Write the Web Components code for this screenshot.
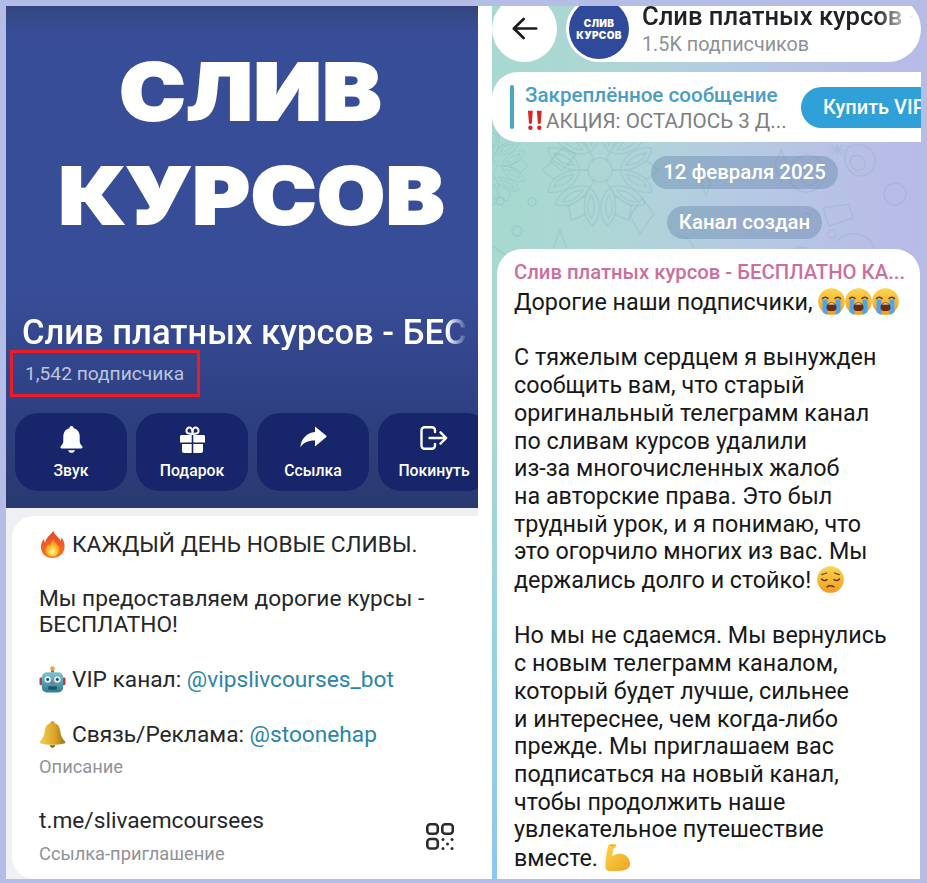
<!DOCTYPE html>
<html lang="ru"><head><meta charset="utf-8"><title>Слив платных курсов</title>
<style>html,body{margin:0;padding:0;height:883px;overflow:hidden;background:#b3bde6;font-family:Roboto,"Liberation Sans",sans-serif}</style>
</head><body>
<x-page>
  <x-profile slot="left"></x-profile>
  <x-chat slot="right"></x-chat>
</x-page>
<script>
const ICONS={
 bell:`<svg width="23" height="28" viewBox="0 0 23 28" fill="#fff"><path d="M11.5 0c1.3 0 2.2 1 2.2 2.3 4 1 6 4.3 6 8.2v5c0 2 1.3 3.3 2.5 4.8.8 1 .3 2.2-1 2.2H1.8c-1.3 0-1.8-1.2-1-2.2 1.2-1.5 2.5-2.8 2.5-4.8v-5c0-3.9 2-7.2 6-8.2C9.3 1 10.2 0 11.5 0z"/><path d="M8 24.2h7c-.5 1.6-2 2.6-3.5 2.6S8.5 25.800 8 24.200z"/></svg>`,
 gift:`<svg width="25" height="27" viewBox="0 0 25 27"><g fill="none" stroke="#fff" stroke-width="2"><path d="M12.500 8C10 8 7 8 6.500 5.500 6 3 8 1.200 10 1.500c2 .4 2.500 3 2.500 6.500zM12.500 8c2.500 0 5.500 0 6-2.500.5-2.500-1.500-4.300-3.500-4-2 .4-2.500 3-2.500 6.500z"/></g><g fill="#fff"><path d="M1.500 9h10.200v7.500H0V10.500C0 9.700.7 9 1.500 9zM13.300 9h10.200c.8 0 1.500.7 1.500 1.500v6H13.300z"/><path d="M2 18h9.700v9H4c-1.100 0-2-.9-2-2zM13.300 18H23v7c0 1.100-.9 2-2 2h-7.700z"/></g></svg>`,
 share:`<svg width="27" height="22" viewBox="0 0 27 22" fill="#fff"><path d="M15 0.500l11.300 9.300c.4.300.4.900 0 1.200L15 20.500V14.600C8.500 14.400 3.600 16.500.3 21.500 1 13 6.500 6.900 15 6z"/></svg>`,
 exit:`<svg width="28" height="24" viewBox="0 0 28 24" fill="none" stroke="#fff" stroke-width="2.400" stroke-linecap="round" stroke-linejoin="round"><path d="M15 6V4.200A3 3 0 0 0 12 1.200H4.500a3 3 0 0 0-3 3v15.600a3 3 0 0 0 3 3H12a3 3 0 0 0 3-3V18"/><path d="M9.500 12H26M20.500 6.300 26.200 12l-5.700 5.700"/></svg>`,
 qr:`<svg width="28" height="27" viewBox="0 0 28 27" fill="none" stroke="#2b2c2e" stroke-width="2.600"><rect x="1.300" y="1.300" width="10.500" height="9.500" rx="3"/><rect x="16.300" y="1.300" width="10.500" height="9.500" rx="3"/><rect x="1.300" y="16" width="10.500" height="9.500" rx="3"/><g fill="#2b2c2e" stroke="none"><circle cx="17" cy="16.500" r="1.500"/><circle cx="26" cy="16.500" r="1.500"/><circle cx="21.500" cy="21" r="1.500"/><circle cx="17" cy="25.500" r="1.500"/><circle cx="26" cy="25.500" r="1.500"/></g></svg>`,
 back:`<svg width="26" height="23" viewBox="0 0 28 24" fill="none" stroke="#1b1c1e" stroke-width="2.900" stroke-linecap="round" stroke-linejoin="round"><path d="M26 12H2.500M12.500 1.800 2 12l10.500 10.200"/></svg>`
};
const EMOJI={
 fire:`<svg viewBox="0 0 27 28"><defs><linearGradient id="f" x1="0" y1="0" x2="0" y2="1"><stop offset="0" stop-color="#e8452a"/><stop offset="1" stop-color="#f47a20"/></linearGradient><radialGradient id="g" cx=".5" cy=".72" r=".6"><stop offset="0" stop-color="#fff6b0"/><stop offset=".5" stop-color="#fdc22e"/><stop offset="1" stop-color="#f68a1e"/></radialGradient></defs><path fill="url(#f)" d="M14.500 0c1 4 5 6 7.500 10 .6-1 .8-2 .8-3.300C25.400 10 26 13 26 16c0 7-5.500 12-12.500 12S1.500 23 1.500 16.500c0-3 1.200-6 3-8.500 0 1.500.5 3 1.500 3.800C6.500 7 11 4.500 14.500 0z"/><path fill="url(#g)" d="M14.500 8.500c.5 3 4.800 5 6 9 1 4.500-2.500 9-7 9s-8-3.500-7-8c.5-2.300 2-3.800 3-5 .3 1 .7 1.700 1.500 2 0-3 1.500-5 3.500-7z"/></svg>`,
 bot:`<svg viewBox="0 0 27 28"><defs><linearGradient id="b" x1="0" y1="0" x2="0" y2="1"><stop offset="0" stop-color="#7fc4d0"/><stop offset="1" stop-color="#2e7f95"/></linearGradient></defs><rect x="12" y="3.500" width="3" height="4" fill="#8a6d3b"/><circle cx="13.500" cy="2.600" r="2.400" fill="#f2a13a"/><rect x="0" y="12" width="4" height="8" rx="1.500" fill="#b43a4c"/><rect x="23" y="12" width="4" height="8" rx="1.500" fill="#b43a4c"/><rect x="2.500" y="6.500" width="22" height="21" rx="5" fill="url(#b)"/><circle cx="8.500" cy="14" r="3.300" fill="#dfeef2"/><circle cx="18.500" cy="14" r="3.300" fill="#dfeef2"/><circle cx="8.500" cy="14" r="1.500" fill="#254a5a"/><circle cx="18.500" cy="14" r="1.500" fill="#254a5a"/><path d="M13.500 15.500l2 3.500h-4z" fill="#d94a4a"/><rect x="9" y="21" width="9" height="3.500" rx="1" fill="#21566a"/></svg>`,
 bell:`<svg viewBox="0 0 27 28"><defs><linearGradient id="c" x1="0" y1="0" x2="1" y2="0"><stop offset="0" stop-color="#f6d04e"/><stop offset=".6" stop-color="#d9a326"/><stop offset="1" stop-color="#9a7414"/></linearGradient></defs><circle cx="13.500" cy="2.500" r="2.300" fill="#c4961e"/><path fill="url(#c)" d="M13.500 2c5 0 7.500 3.500 8 8 .5 5 2 8 5.200 11.500.5.800 0 1.500-1 1.800-3.500 1-7.700 1.400-12.200 1.400s-8.700-.4-12.200-1.400c-1-.3-1.500-1-1-1.800C3.500 18 5 15 5.500 10c.5-4.500 3-8 8-8z"/><path d="M10.500 25.200c.5 1.700 1.700 2.600 3 2.600s2.500-.9 3-2.600z" fill="#7e5e10"/></svg>`,
 cry:`<svg viewBox="0 0 27 27"><defs><linearGradient id="y" x1="0" y1="0" x2="0" y2="1"><stop offset="0" stop-color="#fcd64e"/><stop offset="1" stop-color="#f39a1f"/></linearGradient></defs><circle cx="13.500" cy="13.500" r="13.300" fill="url(#y)"/><path d="M4.500 10.500c1.300-1.700 4.200-1.700 5.500 0M17 10.500c1.300-1.700 4.200-1.700 5.500 0" stroke="#5a3610" stroke-width="1.500" fill="none" stroke-linecap="round"/><path d="M4.500 11.500h5v15.200C7 26.200 5.500 25 4.500 24zM17.500 11.500h5V24c-1 1-2.500 2.200-5 2.700z" fill="#4ea6ea"/><path d="M8.500 19.500c0-3 2.300-5 5-5s5 2 5 5c0 3-2.200 3.500-5 3.500s-5-.5-5-3.500z" fill="#6b2b12"/><path d="M10 16.500c1-1 2.200-1.300 3.500-1.300s2.500.3 3.500 1.300z" fill="#fff"/></svg>`,
 sad:`<svg viewBox="0 0 27 27"><defs><linearGradient id="s" x1="0" y1="0" x2="0" y2="1"><stop offset="0" stop-color="#fcd64e"/><stop offset="1" stop-color="#f39a1f"/></linearGradient></defs><circle cx="13.500" cy="13.500" r="13.300" fill="url(#s)"/><path d="M4.800 8.700 9.500 7M22.200 8.700 17.500 7" stroke="#6b4312" stroke-width="1.300" fill="none" stroke-linecap="round"/><path d="M4.500 13c1.500 2 4 2 5.500.5M17 13.500c1.500 1.500 4 1.500 5.500-.5" stroke="#5a3610" stroke-width="1.500" fill="none" stroke-linecap="round"/><path d="M10 20.800c2-1.300 5-1.300 7 0" stroke="#5a3610" stroke-width="1.500" fill="none" stroke-linecap="round"/></svg>`,
 arm:`<svg viewBox="0 0 27 28"><defs><linearGradient id="m" x1="0" y1="0" x2="1" y2="1"><stop offset="0" stop-color="#fcd54e"/><stop offset="1" stop-color="#eea320"/></linearGradient></defs><path fill="url(#m)" d="M4.500.5 11 0c1 0 1.500 1 1.200 2l-1 2-1.800 1-.7 2.500-.7 5.500c2-2 5-3.200 9-2.800 5 .5 9 4.500 9.500 9.500.3 3.500-1.200 5.500-4 6.800-4 1.700-13 1.900-17.500 1.500-2.500-.2-4-1.500-4-4C1 18 1.500 10 3.500 3c.2-1 .5-2.300 1-2.500z"/><path d="M6 1.500c1.800-.3 3 .2 3.500 1" stroke="#c9851a" stroke-width=".8" fill="none"/></svg>`,
 bang:`<svg viewBox="0 0 20 26"><g fill="#d9261c"><path d="M1.300 1h6l-1.300 16H2.600z"/><circle cx="4.300" cy="22" r="2.700"/><path d="M12.300 1h6l-1.300 16h-3.400z"/><circle cx="15.300" cy="22" r="2.700"/></g></svg>`
};
class El extends HTMLElement{
  connectedCallback(){ if(!this.shadowRoot){ this.attachShadow({mode:'open'}).innerHTML=this.render(); } }
}
let eid=0;
customElements.define('x-emoji',class extends El{
  render(){
    const n=this.getAttribute('name'),w=this.getAttribute('w')||27,h=this.getAttribute('h')||27;
    const u='e'+(++eid);
    const svg=EMOJI[n].replace(/id="(\w)"/g,`id="${u}$1"`).replace(/url\(#(\w)\)/g,`url(#${u}$1)`);
    return `<style>:host{display:inline-block;width:${w}px;height:${h}px;vertical-align:-6px}svg{display:block;width:100%;height:100%}</style>${svg}`;
  }
});
customElements.define('x-page',class extends El{
  render(){return `<style>
    :host{display:block;box-sizing:border-box;width:927px;height:883px;padding:6px 6px 4px;background:#b3bde6}
    .in{display:grid;grid-template-columns:472px 429px;column-gap:14px;height:873px;background:#fff;overflow:hidden}
  </style><div class="in"><slot name="left"></slot><slot name="right"></slot></div>`}
});
customElements.define('x-action',class extends El{
  render(){return `<style>
    :host{display:flex;flex:none;flex-direction:column;align-items:center;box-sizing:border-box;width:112px;height:78px;border-radius:23px;background:#17266a;color:#fff;font:500 15.800px/18px Roboto,sans-serif}
    .i{height:29px;margin-top:13px;display:flex;align-items:flex-start;justify-content:center}
    svg{display:block}
    .l{margin-top:7px;white-space:nowrap}
  </style><div class="i">${ICONS[this.getAttribute('icon')]}</div><div class="l"><slot></slot></div>`}
});
customElements.define('x-hero',class extends El{
  render(){return `<style>
    :host{display:block;flex:none;height:502px;box-sizing:border-box;overflow:hidden;background:linear-gradient(180deg,#334681 0,#384d97 30px,#384d97 290px,#2f4083 400px,#293970 502px);color:#fff;font-family:Roboto,sans-serif}
    .logo{padding-top:34px;height:263px;box-sizing:border-box;text-align:center;font:900 78px/103.500px Inter,sans-serif;letter-spacing:1px;-webkit-text-stroke:2px #fff}
    .logo div{white-space:nowrap}
    .logo .a{transform:translateX(9px) scaleX(1.128)}
    .logo .b{transform:translateX(10px) scaleX(1.118)}
    .t{margin:45px 0 0 16px;width:446px;overflow:hidden;white-space:nowrap;font:500 34.600px/36px Roboto,sans-serif;-webkit-mask-image:linear-gradient(90deg,#000 425px,transparent 446px);mask-image:linear-gradient(90deg,#000 425px,transparent 446px)}
    .sub{box-sizing:border-box;width:190px;height:47px;margin:0 0 0 4px;border:3px solid #ed1c24;padding-left:12px;font:400 19.200px/41px Roboto,sans-serif;color:#bcc5de;white-space:nowrap}
    .row{display:flex;gap:9px;margin:16px 0 0 9px;overflow:hidden}
  </style>
  <div class="logo"><div class="a">СЛИВ</div><div class="b">КУРСОВ</div></div>
  <div class="t">Слив платных курсов - БЕСПЛАТНО КАНАЛ</div>
  <div class="sub">1,542 подписчика</div>
  <div class="row"><x-action icon="bell">Звук</x-action><x-action icon="gift">Подарок</x-action><x-action icon="share">Ссылка</x-action><x-action icon="exit">Покинуть</x-action></div>`}
});
customElements.define('x-about',class extends El{
  render(){return `<style>
    :host{display:block;flex:1;min-height:0;background:#eff0f4;padding:8px 0 0 6px;font-family:Roboto,sans-serif;color:#26272a}
    .c{position:relative;height:100%;box-sizing:border-box;background:#fff;border-radius:22px 0 0 22px;padding:15px 0 0 27px;font-size:22.700px;line-height:26.800px;white-space:nowrap}
    a{color:#2a85a8;text-decoration:none}
    .m{margin-bottom:26.800px}
    .m.z{margin-bottom:0}
    .cap{color:#909397;font-size:18.300px;line-height:20px}
    .link{display:flex;justify-content:space-between;align-items:flex-end;padding-right:24px;margin-top:31px}
    .link .cap{margin-top:6px;line-height:26px}
    .q{margin-bottom:17px}
    svg{display:block}
    x-emoji{margin-right:6px}
  </style><div class="c">
    <div class="m"><x-emoji name="fire"></x-emoji>КАЖДЫЙ ДЕНЬ НОВЫЕ СЛИВЫ.</div>
    <div class="m">Мы предоставляем дорогие курсы -<br>БЕСПЛАТНО!</div>
    <div class="m"><x-emoji name="bot"></x-emoji>VIP канал: <a>@vipslivcourses_bot</a></div>
    <div class="m z"><x-emoji name="bell"></x-emoji>Связь/Реклама: <a>@stoonehap</a></div>
    <div class="cap" style="margin-top:9px">Описание</div>
    <div class="link"><div>t.me/slivaemcoursees<div class="cap">Ссылка-приглашение</div></div><div class="q">${ICONS.qr}</div></div>
  </div>`}
});
customElements.define('x-profile',class extends El{
  render(){return `<style>:host{display:flex;flex-direction:column;height:873px;overflow:hidden}</style><x-hero></x-hero><x-about></x-about>`}
});
const flake=(x,y,s)=>`<g transform="translate(${x} ${y}) scale(${s})">${[30,90,150,210,270,330].map(a=>`<g transform="rotate(${a})"><path d="M0-12V-20M0-20C-16-24-24-38-22-52-8-50 0-36 0-20zM0-20C16-24 24-38 22-52 8-50 0-36 0-20zM-5-26C-12-30-16-38-17-46-10-44-5-36-5-26zM5-26C12-30 16-38 17-46 10-44 5-36 5-26zM0-58l9 11-9 17-9-17z"/></g>`).join('')}<circle r="12"/></g>`;
customElements.define('x-wallpaper',class extends El{
  render(){return `<style>
    :host{position:absolute;inset:0;display:block;background:radial-gradient(circle at 0 100%,#8cc8ee 0,rgba(140,200,238,0) 460px),linear-gradient(90deg,#a6d9cf 0,#aed5d6 30%,#b5cbe2 55%,#b8bfe6 85%,#b7bbe6 100%)}
    svg{display:block;width:100%;height:100%}
  </style><svg viewBox="0 0 429 873" fill="none" stroke="#5f8fa0" stroke-opacity=".14" stroke-width="1.400">
    ${flake(108,164,1)}${flake(-4,160,.7)}
    <path d="M58 155l14-14 12 8-14 16zM150 192l12 16-14 20-10-18zM62 240l6-16 6 16-6 16z"/>
    <circle cx="8" cy="195" r="4"/><circle cx="40" cy="196" r="4"/><circle cx="25" cy="225" r="5"/>
    <g transform="translate(345 180)"><path d="M-40-28c16-8 30 2 28 18-2 14-20 22-32 10-6-8-4-22 4-28zM-32-18c8-4 14 0 14 8 0 8-10 12-16 6-4-4-2-11 2-14zM14-40c14-4 26 4 24 18-2 12-18 16-26 6-6-8-6-20 2-24zM16-30c8-2 12 2 12 8 0 6-8 8-12 4-4-4-4-10 0-12zM-14 22l26-4 4 14-24 8zM0-30v-12M-6-36l12 0M-5-40l10 8M5-40l-10 8"/></g>
    <path d="M283 158l6 18 6-18-6-14zM210 178l4 12 4-12-4-12z"/>
    <path d="M345 235c10-12 30-8 36 4s-6 24-20 26M300 245c8-6 20-4 24 6M0 240l30 20M186 230c14 0 22 16 10 26"/>
    <circle cx="340" cy="228" r="4"/><circle cx="403" cy="188" r="11"/><circle cx="315" cy="210" r="3"/>
  </svg>`}
});
customElements.define('x-pill',class extends El{
  render(){return `<style>:host{display:block;width:max-content;box-sizing:border-box;height:33px;padding:0 12px;border-radius:17px;background:rgba(92,125,165,.38);color:#fff;font:500 20.400px/33px Roboto,sans-serif;white-space:nowrap}</style><slot></slot>`}
});
customElements.define('x-topbar',class extends El{
  render(){return `<style>
    :host{display:flex;gap:9px;margin-top:-10px;height:66px;align-items:flex-start;font-family:Roboto,sans-serif}
    .b{flex:none;box-sizing:border-box;width:65px;height:66px;border-radius:50%;background:#fff;display:flex;align-items:center;justify-content:center;padding-bottom:2px}
    svg{display:block}
    .h{flex:none;display:flex;width:355px;height:66px;background:#fff;border-radius:33px;overflow:hidden;box-sizing:border-box;padding-left:3px}
    .av{flex:none;width:60px;height:60px;border-radius:50%;margin-top:3px;background:#2f4a9a;color:#fff;font:900 10px/12px Inter,sans-serif;text-align:center;display:flex;flex-direction:column;justify-content:center;letter-spacing:.3px}
    .tx{margin-left:13px;min-width:0;padding-top:5px}
    .n{font:500 25.600px/30px Roboto,sans-serif;color:#212225;white-space:nowrap;-webkit-mask-image:linear-gradient(90deg,#000 235px,transparent 272px);mask-image:linear-gradient(90deg,#000 235px,transparent 272px)}
    .s{font:400 19.800px/26px Roboto,sans-serif;color:#8e9195;white-space:nowrap;margin-top:1px}
  </style><div class="b">${ICONS.back}</div>
  <div class="h"><div class="av"><div>СЛИВ</div><div>КУРСОВ</div></div><div class="tx"><div class="n">Слив платных курсов -</div><div class="s">1.5K подписчиков</div></div></div>`}
});
customElements.define('x-pinned',class extends El{
  render(){return `<style>
    :host{display:flex;align-items:center;box-sizing:border-box;height:70px;margin-top:10px;background:#fff;border-radius:26px 0 0 26px;padding-left:18px;overflow:hidden;font-family:Roboto,sans-serif}
    .bar{flex:none;width:4px;height:44px;border-radius:2px;background:#4ea3c9}
    .t{flex:none;width:276px;margin-left:11px;white-space:nowrap;padding-top:2px}
    .a{font:500 20.600px/25px Roboto,sans-serif;color:#4a9dc4}
    .d{font:400 20.600px/26px Roboto,sans-serif;color:#7c7e82;display:flex;align-items:center}
    x-emoji{margin-right:1px}
    .btn{flex:none;box-sizing:border-box;width:140px;height:41px;border-radius:21px;background:#2fa0d8;color:#fff;font:500 20px/41px Roboto,sans-serif;padding-left:22px;white-space:nowrap}
  </style><div class="bar"></div><div class="t"><div class="a">Закреплённое сообщение</div><div class="d"><x-emoji name="bang" w="20" h="21"></x-emoji>АКЦИЯ: ОСТАЛОСЬ 3 Д...</div></div><div class="btn">Купить VIP</div>`}
});
customElements.define('x-bubble',class extends El{
  render(){return `<style>
    :host{display:block;box-sizing:border-box;margin:10px 1px 0 5px;background:#fff;border-radius:25px 25px 0 0;padding:11px 0 0 17px;height:640px;overflow:hidden;font-family:Roboto,sans-serif}
    .n{font:500 20.300px/24px Roboto,sans-serif;color:#cc6f9d;white-space:nowrap}
    .m{font:400 23.300px/27.700px Roboto,sans-serif;color:#17181a;white-space:nowrap;margin-top:4px}
    x-emoji{vertical-align:-5px}
  </style><div class="n">Слив платных курсов - БЕСПЛАТНО КА...</div>
  <div class="m">Дорогие наши подписчики, <x-emoji name="cry"></x-emoji><x-emoji name="cry"></x-emoji><x-emoji name="cry"></x-emoji><br><br>С тяжелым сердцем я вынужден<br>сообщить вам, что старый<br>оригинальный телеграмм канал<br>по сливам курсов удалили<br>из-за многочисленных жалоб<br>на авторские права. Это был<br>трудный урок, и я понимаю, что<br>это огорчило многих из вас. Мы<br>держались долго и стойко! <x-emoji name="sad"></x-emoji><br><br>Но мы не сдаемся. Мы вернулись<br>с новым телеграмм каналом,<br>который будет лучше, сильнее<br>и интереснее, чем когда-либо<br>прежде. Мы приглашаем вас<br>подписаться на новый канал,<br>чтобы продолжить наше<br>увлекательное путешествие<br>вместе. <x-emoji name="arm"></x-emoji></div>`}
});
customElements.define('x-chat',class extends El{
  render(){return `<style>
    :host{display:block;position:relative;height:873px;overflow:hidden}
    .f{position:relative}
    .dates{display:flex;flex-direction:column;align-items:center;gap:17px;padding:14px 0 0 76px}
  </style><x-wallpaper></x-wallpaper><div class="f"><x-topbar></x-topbar><x-pinned></x-pinned>
  <div class="dates"><x-pill>12 февраля 2025</x-pill><x-pill>Канал создан</x-pill></div><x-bubble></x-bubble></div>`}
});
</script>
</body></html>
